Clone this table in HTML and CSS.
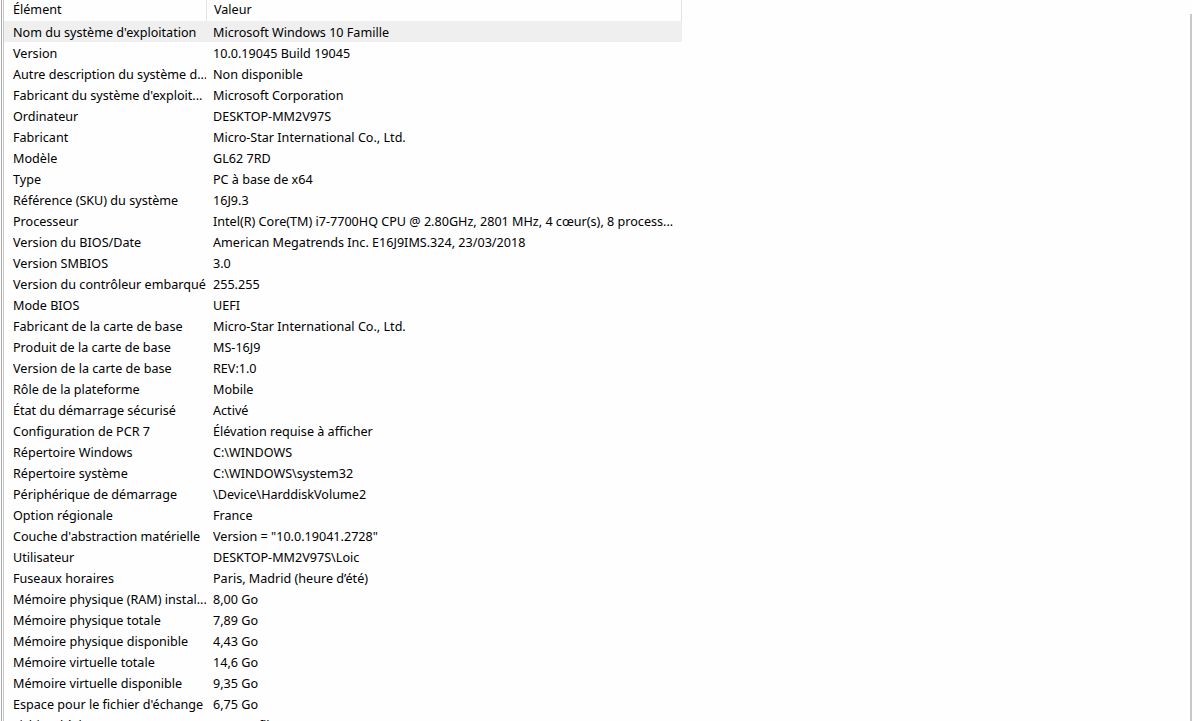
FILE: index.html
```html
<!DOCTYPE html>
<html lang="fr">
<head>
<meta charset="utf-8">
<title>Informations système</title>
<link rel="stylesheet" href="styles.css">
</head>
<body>
<div class="frame">
  <div class="edge edge-outer"></div>
  <div class="edge edge-inner"></div>
  <div class="list">
    <div class="row head">
      <div class="c1">Élément</div>
      <div class="c2">Valeur</div>
    </div>
    <div class="row sel"><div class="c1">Nom du système d'exploitation</div><div class="c2">Microsoft Windows 10 Famille</div></div>
    <div class="row"><div class="c1">Version</div><div class="c2">10.0.19045 Build 19045</div></div>
    <div class="row"><div class="c1">Autre description du système d...</div><div class="c2">Non disponible</div></div>
    <div class="row"><div class="c1">Fabricant du système d'exploit...</div><div class="c2">Microsoft Corporation</div></div>
    <div class="row"><div class="c1">Ordinateur</div><div class="c2">DESKTOP-MM2V97S</div></div>
    <div class="row"><div class="c1">Fabricant</div><div class="c2">Micro-Star International Co., Ltd.</div></div>
    <div class="row"><div class="c1">Modèle</div><div class="c2">GL62 7RD</div></div>
    <div class="row"><div class="c1">Type</div><div class="c2">PC à base de x64</div></div>
    <div class="row"><div class="c1">Référence (SKU) du système</div><div class="c2">16J9.3</div></div>
    <div class="row"><div class="c1">Processeur</div><div class="c2">Intel(R) Core(TM) i7-7700HQ CPU @ 2.80GHz, 2801 MHz, 4 cœur(s), 8 process...</div></div>
    <div class="row"><div class="c1">Version du BIOS/Date</div><div class="c2">American Megatrends Inc. E16J9IMS.324, 23/03/2018</div></div>
    <div class="row"><div class="c1">Version SMBIOS</div><div class="c2">3.0</div></div>
    <div class="row"><div class="c1">Version du contrôleur embarqué</div><div class="c2">255.255</div></div>
    <div class="row"><div class="c1">Mode BIOS</div><div class="c2">UEFI</div></div>
    <div class="row"><div class="c1">Fabricant de la carte de base</div><div class="c2">Micro-Star International Co., Ltd.</div></div>
    <div class="row"><div class="c1">Produit de la carte de base</div><div class="c2">MS-16J9</div></div>
    <div class="row"><div class="c1">Version de la carte de base</div><div class="c2">REV:1.0</div></div>
    <div class="row"><div class="c1">Rôle de la plateforme</div><div class="c2">Mobile</div></div>
    <div class="row"><div class="c1">État du démarrage sécurisé</div><div class="c2">Activé</div></div>
    <div class="row"><div class="c1">Configuration de PCR 7</div><div class="c2">Élévation requise à afficher</div></div>
    <div class="row"><div class="c1">Répertoire Windows</div><div class="c2">C:\WINDOWS</div></div>
    <div class="row"><div class="c1">Répertoire système</div><div class="c2">C:\WINDOWS\system32</div></div>
    <div class="row"><div class="c1">Périphérique de démarrage</div><div class="c2">\Device\HarddiskVolume2</div></div>
    <div class="row"><div class="c1">Option régionale</div><div class="c2">France</div></div>
    <div class="row"><div class="c1">Couche d'abstraction matérielle</div><div class="c2">Version = "10.0.19041.2728"</div></div>
    <div class="row"><div class="c1">Utilisateur</div><div class="c2">DESKTOP-MM2V97S\Loic</div></div>
    <div class="row"><div class="c1">Fuseaux horaires</div><div class="c2">Paris, Madrid (heure d’été)</div></div>
    <div class="row"><div class="c1">Mémoire physique (RAM) instal...</div><div class="c2">8,00 Go</div></div>
    <div class="row"><div class="c1">Mémoire physique totale</div><div class="c2">7,89 Go</div></div>
    <div class="row"><div class="c1">Mémoire physique disponible</div><div class="c2">4,43 Go</div></div>
    <div class="row"><div class="c1">Mémoire virtuelle totale</div><div class="c2">14,6 Go</div></div>
    <div class="row"><div class="c1">Mémoire virtuelle disponible</div><div class="c2">9,35 Go</div></div>
    <div class="row"><div class="c1">Espace pour le fichier d'échange</div><div class="c2">6,75 Go</div></div>
    <div class="row"><div class="c1">Fichier d'échange</div><div class="c2">C:\pagefile.sys</div></div>
  </div>
  <div class="scroll"></div>
</div>
</body>
</html>
```
FILE: styles.css
```css
html, body {
  margin: 0;
  padding: 0;
  height: 100%;
  overflow: hidden;
  background: #fefefe;
}
body {
  font-family: "Noto Sans", "Liberation Sans", sans-serif;
  font-size: 12.6px;
  color: #000;
}
.frame {
  display: flex;
  height: 721px;
  overflow: hidden;
}
.edge {
  width: 1px;
  flex: none;
}
.edge-outer {
  margin-left: 1px;
  background: #a8a8a8;
}
.edge-inner {
  margin-left: 1px;
  background: #c8c8c8;
}
.list {
  flex: 1;
  display: flex;
  flex-direction: column;
}
.row {
  display: flex;
  height: 21px;
  box-sizing: border-box;
  padding-top: 2px;
  flex: none;
  align-items: center;
  width: 678px;
  white-space: nowrap;
}
.c1 {
  width: 193px;
  padding-left: 9px;
  overflow: hidden;
  flex: none;
}
.c2 {
  width: 468px;
  padding-left: 7px;
  overflow: hidden;
  flex: none;
}
.head {
  height: 21px;
  padding-top: 0;
  align-items: stretch;
}
.head .c1,
.head .c2 {
  line-height: 19px;
  border-right: 1px solid #e3e3e3;
}
.head .c1 {
  width: 193px;
}
.head .c2 {
  width: 467px;
}
.sel {
  background: #efefef;
}
.scroll {
  width: 2px;
  flex: none;
  margin-top: 14px;
  background: #c9c9c9;
}
```
